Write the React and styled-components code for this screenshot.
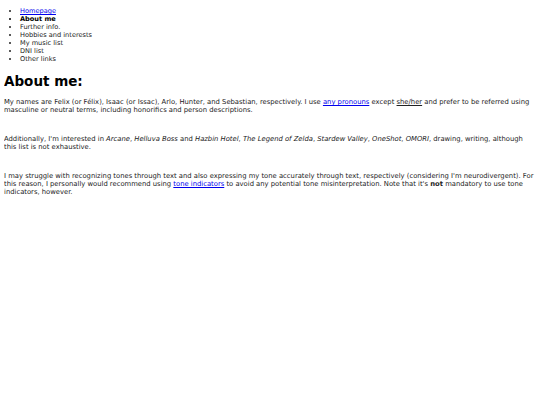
import React from "react";
import styled, { createGlobalStyle } from "styled-components";

const GlobalStyle = createGlobalStyle`
  body {
    margin: 4px;
    background: #ffffff;
    color: #222222;
    font-family: "DejaVu Sans", Verdana, sans-serif;
    font-size: 6.6px;
    line-height: 8px;
  }
`;

// navigation list at the top
const Nav = styled.ul`
  margin: 3px 0 0 0;
  padding-left: 16px;
  list-style: disc;
`;

const NavItem = styled.li`
  font-weight: ${(p) => (p.$current ? "bold" : "normal")};
  color: ${(p) => (p.$current ? "#000" : "#222")};
`;

const Heading = styled.h1`
  font-size: 13.5px;
  line-height: 16px;
  font-weight: bold;
  color: #000;
  margin: 10px 0 9px 0;
`;

const Para = styled.p`
  margin: 0 0 21px 0;
  font-size: 6.8px;
`;

const A = styled.a`
  color: #0000ee;
`;

const Underlined = styled.span`
  text-decoration: underline;
`;

export default function App() {
  return (
    <>
      <GlobalStyle />
      <Nav>
        <NavItem><A href="#">Homepage</A></NavItem>
        <NavItem $current>About me</NavItem>
        <NavItem>Further info.</NavItem>
        <NavItem>Hobbies and interests</NavItem>
        <NavItem>My music list</NavItem>
        <NavItem>DNI list</NavItem>
        <NavItem>Other links</NavItem>
      </Nav>
      <Heading>About me:</Heading>
      <Para>
        My names are Felix (or Félix), Isaac (or Issac), Arlo, Hunter, and Sebastian, respectively. I use{" "}
        <A href="#">any pronouns</A> except <Underlined>she/her</Underlined> and prefer to be referred using
        masculine or neutral terms, including honorifics and person descriptions.
      </Para>
      <Para>
        Additionally, I'm interested in <i>Arcane</i>, <i>Helluva Boss</i> and <i>Hazbin Hotel</i>,{" "}
        <i>The Legend of Zelda</i>, <i>Stardew Valley</i>, <i>OneShot</i>, <i>OMORI</i>, drawing, writing, although
        this list is not exhaustive.
      </Para>
      <Para>
        I may struggle with recognizing tones through text and also expressing my tone accurately through text,
        respectively (considering I'm neurodivergent). For this reason, I personally would recommend using{" "}
        <A href="#">tone indicators</A> to avoid any potential tone misinterpretation. Note that it's{" "}
        <b>not</b> mandatory to use tone indicators, however.
      </Para>
    </>
  );
}
